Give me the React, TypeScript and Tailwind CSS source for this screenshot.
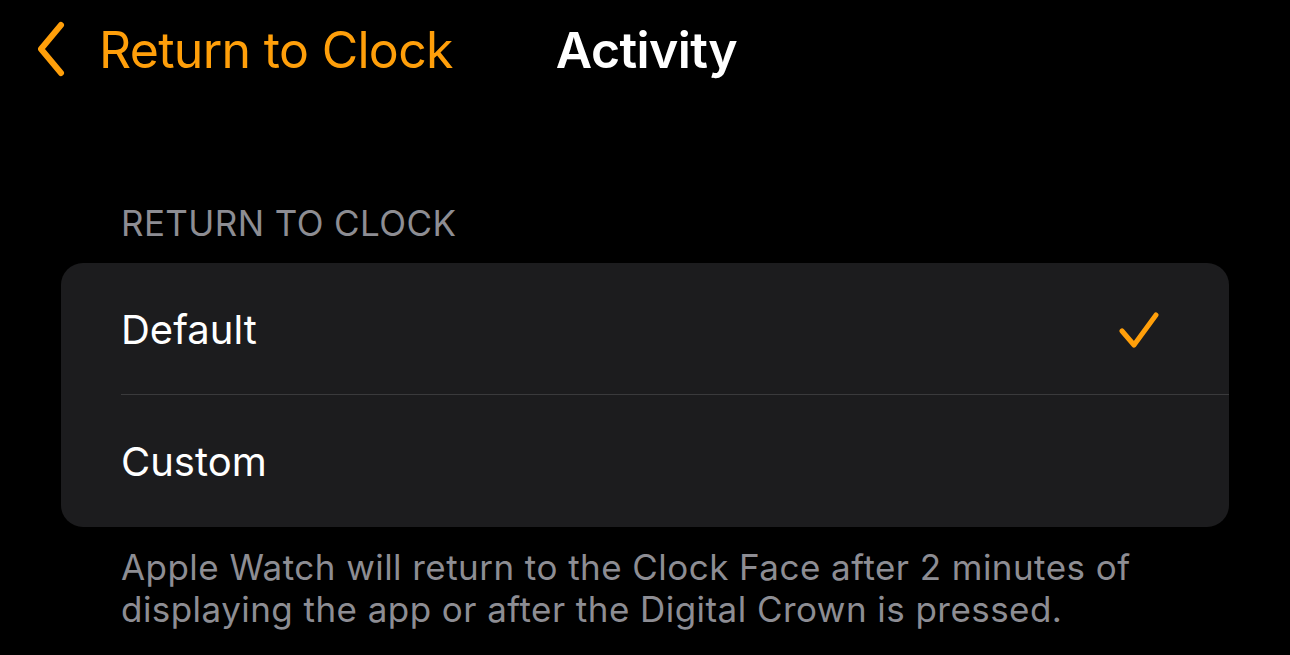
const ORANGE = '#ff9f0a';

const BackChevron = () => (
  <svg width="30" height="58" viewBox="0 0 30 58" fill="none">
    <path
      d="M25 4 L5 28 L25 52"
      stroke={ORANGE}
      strokeWidth="6"
      strokeLinecap="round"
      strokeLinejoin="round"
    />
  </svg>
);

const Check = () => (
  <svg width="44" height="40" viewBox="0 0 44 40" fill="none">
    <path
      d="M4 19 L16 33 L38 3"
      stroke={ORANGE}
      strokeWidth="5"
      strokeLinecap="round"
      strokeLinejoin="round"
    />
  </svg>
);

const options = [
  { label: 'Default', selected: true },
  { label: 'Custom', selected: false },
];

export default function App() {
  return (
    <div
      className="w-[1290px] h-[655px] bg-black overflow-hidden text-white"
      style={{ fontFamily: 'Inter, Roboto, "Noto Sans", sans-serif' }}
    >
      {/* Nav bar */}
      <div className="relative h-[100px] flex items-center">
        <div className="flex items-center pl-[36px] gap-[33px] text-[#ff9f0a] text-[50px] leading-none">
          <BackChevron />
          <span className="tracking-[-0.7px]">Return to Clock</span>
        </div>
        <div className="absolute inset-x-0 top-0 h-[100px] flex items-center justify-center pointer-events-none">
          <span className="text-[50px] font-semibold leading-none tracking-[-0.6px] pl-[3px]">Activity</span>
        </div>
      </div>

      {/* Section */}
      <div className="pt-[106px] px-[61px]">
        <div className="pl-[60px] text-[35px] leading-none text-[#8d8d93] tracking-[0.4px] pb-[22px]">
          RETURN TO CLOCK
        </div>
        <div className="bg-[#1c1c1e] rounded-[22px] overflow-hidden">
          {options.map((opt, i) => (
            <div key={opt.label} className="pl-[60px]">
              <div
                className={`h-[132px] flex items-center justify-between pr-[67px] ${
                  i < options.length - 1 ? 'border-b border-[#3a3a3c]' : ''
                }`}
              >
                <span className="text-[40px] leading-none pt-[2px]">{opt.label}</span>
                {opt.selected && (
                  <div className="pt-[6px]">
                    <Check />
                  </div>
                )}
              </div>
            </div>
          ))}
        </div>
        <p className="pl-[60px] pt-[19px] text-[35px] leading-[42px] tracking-[0.45px] text-[#8d8d93] pr-[60px]">
          Apple Watch will return to the Clock Face after 2 minutes of
          <br />
          displaying the app or after the Digital Crown is pressed.
        </p>
      </div>
    </div>
  );
}
